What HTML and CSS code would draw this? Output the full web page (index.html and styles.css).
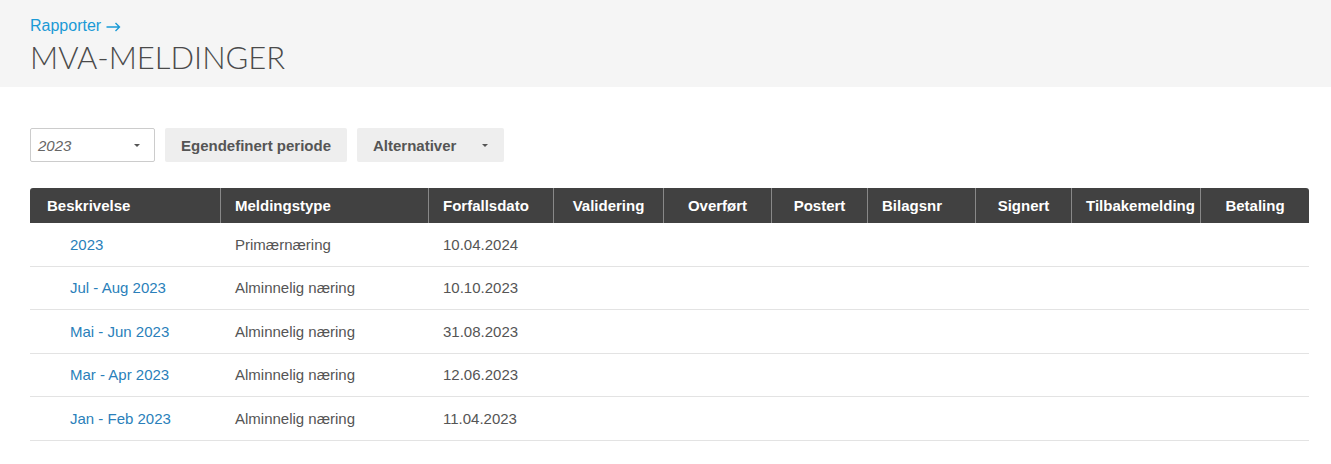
FILE: index.html
```html
<!DOCTYPE html>
<html lang="no">
<head>
<meta charset="utf-8">
<title>MVA-meldinger</title>
<link rel="stylesheet" href="styles.css">
</head>
<body>
<header class="page-head">
  <a class="crumb" href="#">Rapporter <svg class="arrow" width="15" height="10" viewBox="0 0 15 10" aria-hidden="true"><path d="M0.5 5H13.5M9.5 1L13.5 5L9.5 9" fill="none" stroke="currentColor" stroke-width="1.4"/></svg></a>
  <h1 class="title">MVA-MELDINGER</h1>
</header>
<main class="content">
  <div class="toolbar">
    <div class="select"><span>2023</span><span class="caret"></span></div>
    <button class="btn">Egendefinert periode</button>
    <button class="btn btn-drop">Alternativer<span class="caret"></span></button>
  </div>
  <table class="grid">
    <colgroup>
      <col style="width:190px"><col style="width:208px"><col style="width:125px"><col style="width:110px"><col style="width:108px"><col style="width:96px"><col style="width:108px"><col style="width:96px"><col style="width:129px"><col style="width:109px">
    </colgroup>
    <thead>
      <tr>
        <th class="l">Beskrivelse</th>
        <th class="l">Meldingstype</th>
        <th class="l">Forfallsdato</th>
        <th>Validering</th>
        <th>Overført</th>
        <th>Postert</th>
        <th class="l">Bilagsnr</th>
        <th>Signert</th>
        <th class="l">Tilbakemelding</th>
        <th>Betaling</th>
      </tr>
    </thead>
    <tbody>
      <tr><td class="desc"><a href="#">2023</a></td><td>Primærnæring</td><td>10.04.2024</td><td></td><td></td><td></td><td></td><td></td><td></td><td></td></tr>
      <tr><td class="desc"><a href="#">Jul - Aug 2023</a></td><td>Alminnelig næring</td><td>10.10.2023</td><td></td><td></td><td></td><td></td><td></td><td></td><td></td></tr>
      <tr><td class="desc"><a href="#">Mai - Jun 2023</a></td><td>Alminnelig næring</td><td>31.08.2023</td><td></td><td></td><td></td><td></td><td></td><td></td><td></td></tr>
      <tr><td class="desc"><a href="#">Mar - Apr 2023</a></td><td>Alminnelig næring</td><td>12.06.2023</td><td></td><td></td><td></td><td></td><td></td><td></td><td></td></tr>
      <tr><td class="desc"><a href="#">Jan - Feb 2023</a></td><td>Alminnelig næring</td><td>11.04.2023</td><td></td><td></td><td></td><td></td><td></td><td></td><td></td></tr>
    </tbody>
  </table>
</main>
</body>
</html>
```

FILE: styles.css
```css
html, body {
  margin: 0;
  padding: 0;
  background: #fff;
  font-family: "Liberation Sans", Arial, sans-serif;
  color: #555;
}
.page-head {
  background: #f5f5f5;
  padding: 15px 30px 12px;
  height: 60px;
}
.crumb {
  display: inline-flex;
  align-items: center;
  gap: 5px;
  color: #1a9ad6;
  text-decoration: none;
  font-size: 16px;
  line-height: 22px;
}
.arrow {
  display: block;
  margin-top: 1px;
}
.title {
  margin: 0;
  font-family: Lato, "Liberation Sans", sans-serif;
  font-weight: 300;
  font-size: 31px;
  letter-spacing: 0;
  line-height: 40px;
  color: #4a4a4a;
}
.content {
  padding: 41px 22px 0 30px;
}
.toolbar {
  display: flex;
  gap: 10px;
  height: 34px;
  margin-bottom: 26px;
}
.select {
  box-sizing: border-box;
  width: 125px;
  height: 34px;
  border: 1px solid #ccc;
  border-radius: 2px;
  display: flex;
  align-items: center;
  justify-content: space-between;
  padding: 0 14px 0 7px;
  font-style: italic;
  font-size: 15px;
  color: #666;
}
.caret {
  display: inline-block;
  width: 0;
  height: 0;
  border-left: 3px solid transparent;
  border-right: 3px solid transparent;
  border-top: 3px solid #555;
}
.btn {
  height: 34px;
  border: none;
  border-radius: 2px;
  background: #eee;
  font-family: "Liberation Sans", Arial, sans-serif;
  font-weight: bold;
  font-size: 15px;
  color: #555;
  padding: 0 16px;
  cursor: pointer;
}
.btn-drop {
  display: flex;
  align-items: center;
  gap: 26px;
  padding: 0 16px 0 16px;
}
.grid {
  width: 1279px;
  border-collapse: separate;
  border-spacing: 0;
  table-layout: fixed;
  font-size: 15px;
}
.grid th {
  background: #414141;
  color: #fff;
  font-weight: bold;
  height: 35px;
  padding: 0 4px;
  text-align: center;
  border-left: 1px solid #888;
  white-space: nowrap;
}
.grid th:first-child {
  border-left: none;
  border-top-left-radius: 3px;
  padding-left: 17px;
}
.grid th:last-child {
  border-top-right-radius: 3px;
}
.grid th.l {
  text-align: left;
  padding-left: 14px;
}
.grid th:first-child.l {
  padding-left: 17px;
}
.grid td {
  height: 42.5px;
  padding: 0 15px;
  border-bottom: 1px solid #e3e3e3;
  color: #555;
  white-space: nowrap;
}
.grid td.desc {
  padding-left: 40px;
}
.grid td a {
  color: #2a7fba;
  text-decoration: none;
}
```
